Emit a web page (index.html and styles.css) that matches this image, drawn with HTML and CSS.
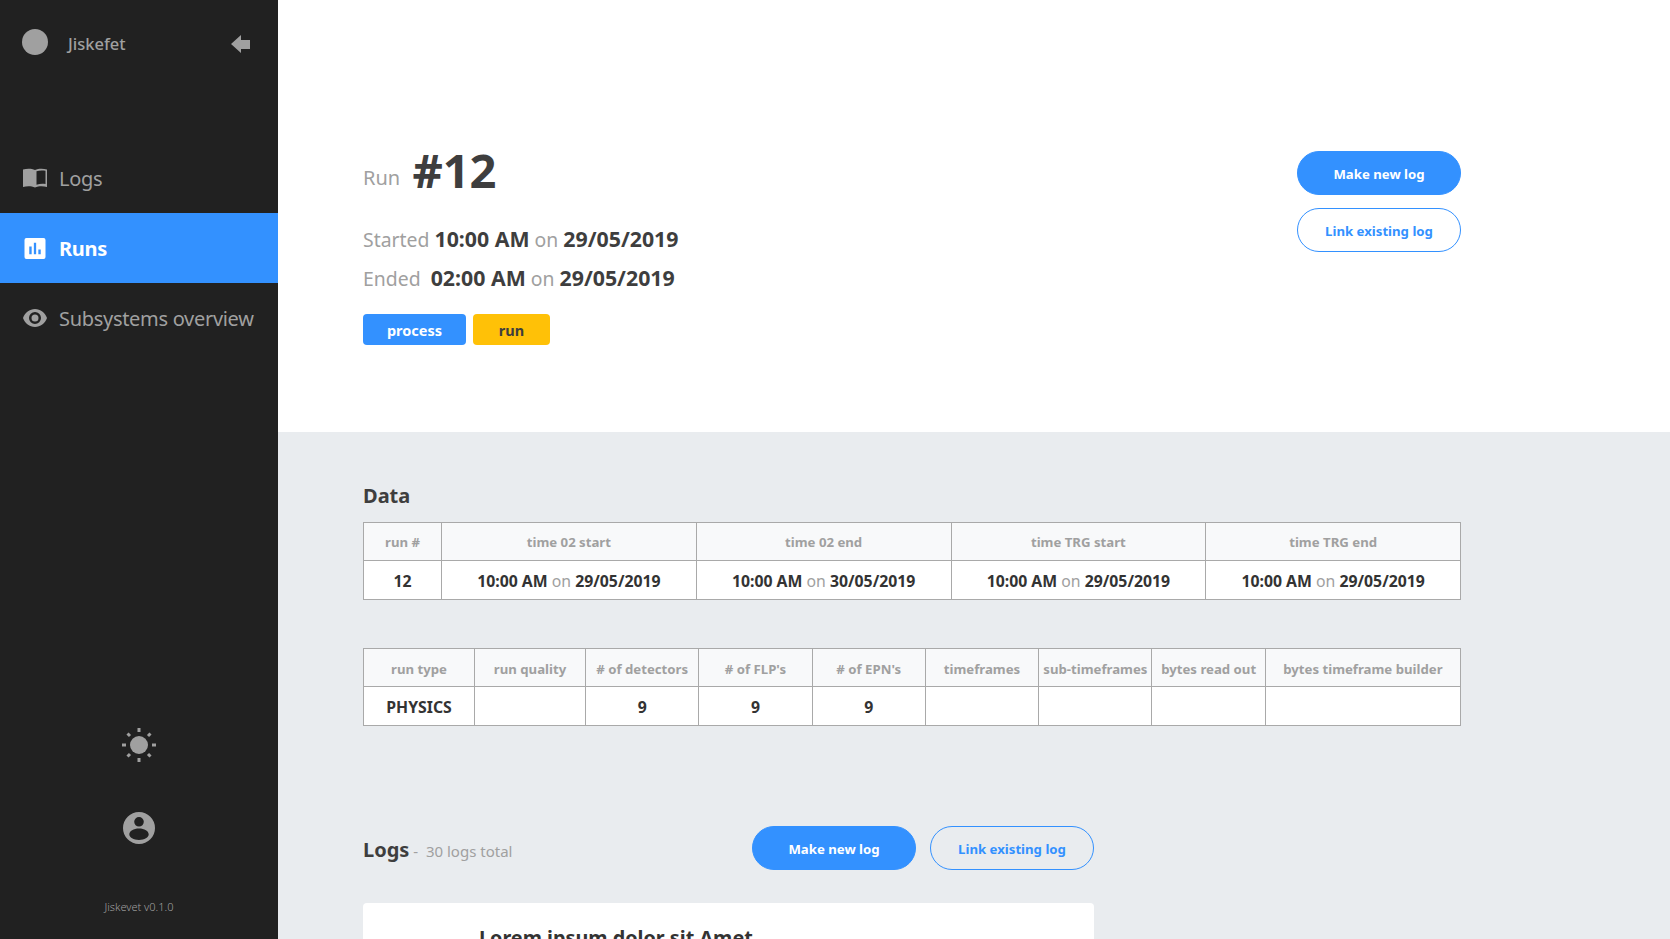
FILE: index.html
```html
<!DOCTYPE html>
<html lang="en">
<head>
  <meta charset="UTF-8" />
  <title>Jiskefet - Run 12</title>
  <link rel="stylesheet" href="styles.css">
</head>
<body>
  <div class="app">
    <!-- Sidebar -->
    <aside class="sidebar">
      <div class="brand">
        <span class="brand-dot"></span>
        <span class="brand-name">Jiskefet</span>
        <svg class="brand-back" width="20" height="20" viewBox="0 0 20 20"><path d="M0 10 L10 1 V6 H19 V15 H10 V19 Z" fill="currentColor"/></svg>
      </div>
      <nav class="nav">
        <a class="nav-item">
          <svg width="24" height="20" viewBox="0 0 24 20"><path fill="currentColor" fill-rule="evenodd" d="M0 1.500C4 .3 8.500.3 12 2c3.500-1.700 8-1.700 12-.5V19c-4-1-8.500-1-12 .6C8.500 18 4 18 0 19ZM13.500 3.200V16.800c2.800-1 5.800-1.200 9-.8V2.800c-3.200-.6-6.400-.4-9 .4Z"/></svg>
          <span>Logs</span>
        </a>
        <a class="nav-item active">
          <svg width="24" height="21" viewBox="0 0 22 22"><path fill="currentColor" fill-rule="evenodd" d="M2 0H20A2 2 0 0 1 22 2V20A2 2 0 0 1 20 22H2A2 2 0 0 1 0 20V2A2 2 0 0 1 2 0ZM5 9V17H7.500V9ZM9.800 5V17H12.200V5ZM14.500 12V17H17V12Z"/></svg>
          <span>Runs</span>
        </a>
        <a class="nav-item">
          <svg width="24" height="18" viewBox="0 0 24 18"><path fill="currentColor" fill-rule="evenodd" d="M12 0C6.500 0 2 3.700 0 9c2 5.300 6.500 9 12 9s10-3.700 12-9C22 3.700 17.500 0 12 0Zm0 15a6 6 0 1 1 0-12 6 6 0 0 1 0 12Zm0-9.500a3.500 3.500 0 1 0 0 7 3.500 3.500 0 0 0 0-7Z"/></svg>
          <span>Subsystems overview</span>
        </a>
      </nav>
      <div class="side-bottom">
        <svg class="side-icon" width="34" height="34" viewBox="0 0 34 34">
          <circle cx="17" cy="17" r="9" fill="currentColor"/>
          <path stroke="currentColor" stroke-width="3" d="M17 0V4M17 30V34M0 17H4M30 17H34M5.500 5.500L8 8M26 26L28.500 28.500M5.500 28.500L8 26M26 8L28.500 5.500"/>
        </svg>
        <svg class="side-icon" width="32" height="32" viewBox="0 0 32 32"><path fill="currentColor" fill-rule="evenodd" d="M16 0a16 16 0 1 0 0 32 16 16 0 0 0 0-32Zm0 5a4.800 4.800 0 1 1 0 9.600 4.800 4.800 0 0 1 0-9.600Zm0 11.500c5.400 0 9.700 2.600 9.700 5.800S21.400 28 16 28s-9.700-2.500-9.700-5.700 4.300-5.800 9.700-5.800Z"/></svg>
        <div class="version">Jiskevet v0.1.0</div>
      </div>
    </aside>

    <main class="main">
      <!-- Run header -->
      <section class="run-head">
        <div class="run-info">
          <div class="run-title"><span class="muted">Run</span> <strong>#12</strong></div>
          <div class="run-time"><span class="muted">Started</span> <b>10:00 AM</b> <span class="muted">on</span> <b>29/05/2019</b></div>
          <div class="run-time"><span class="muted">Ended</span>&nbsp; <b>02:00 AM</b> <span class="muted">on</span> <b>29/05/2019</b></div>
          <div class="tags">
            <span class="tag tag-process">process</span>
            <span class="tag tag-run">run</span>
          </div>
        </div>
        <div class="run-actions">
          <button class="btn btn-fill">Make new log</button>
          <button class="btn btn-line">Link existing log</button>
        </div>
      </section>

      <!-- Data and logs -->
      <section class="run-body">
        <h2 class="data-title">Data</h2>
        <table class="data-table first">
          <colgroup><col class="c-run"><col><col><col><col></colgroup>
          <thead>
            <tr><th>run #</th><th>time 02 start</th><th>time 02 end</th><th>time TRG start</th><th>time TRG end</th></tr>
          </thead>
          <tbody>
            <tr>
              <td>12</td>
              <td>10:00 AM <span class="on">on</span> 29/05/2019</td>
              <td>10:00 AM <span class="on">on</span> 30/05/2019</td>
              <td>10:00 AM <span class="on">on</span> 29/05/2019</td>
              <td>10:00 AM <span class="on">on</span> 29/05/2019</td>
            </tr>
          </tbody>
        </table>
        <table class="data-table second">
          <colgroup><col span="2" class="c-type"><col span="6" class="c-even"><col></colgroup>
          <thead>
            <tr><th>run type</th><th>run quality</th><th># of detectors</th><th># of FLP's</th><th># of EPN's</th><th>timeframes</th><th>sub-timeframes</th><th>bytes read out</th><th>bytes timeframe builder</th></tr>
          </thead>
          <tbody>
            <tr><td>PHYSICS</td><td></td><td>9</td><td>9</td><td>9</td><td></td><td></td><td></td><td></td></tr>
          </tbody>
        </table>

        <div class="logs-bar">
          <div class="logs-title"><strong>Logs</strong> <span class="muted">- &nbsp;30 logs total</span></div>
          <div class="logs-actions">
            <button class="btn btn-fill">Make new log</button>
            <button class="btn btn-line btn-clear">Link existing log</button>
          </div>
        </div>
        <article class="log-card">
          <h3>Lorem ipsum dolor sit Amet</h3>
        </article>
      </section>
    </main>
  </div>
</body>
</html>
```

FILE: styles.css
```css
/* Reset & base */
* { box-sizing: border-box; margin: 0; padding: 0; }
html, body { height: 100%; overflow: hidden; }
body { font-family: "Noto Sans", "Open Sans", sans-serif; background: #e9ecef; color: #3e3e3e; }
.app { display: flex; height: 939px; overflow: hidden; }
.muted { color: #a0a0a0; font-weight: 400; }

/* Sidebar */
.sidebar { width: 278px; flex: none; background: #212121; color: #a0a0a0; display: flex; flex-direction: column; }
.brand { display: flex; align-items: center; height: 84px; padding: 0 27px 0 22px; }
.brand-dot { width: 26px; height: 26px; border-radius: 50%; background: #a0a0a0; margin-right: 20px; }
.brand-name { flex: 1; font-size: 16.500px; font-weight: 500; margin-top: 2px; }
.brand-back { margin-top: 4px; }
.nav { margin-top: 59px; }
.nav-item { display: flex; align-items: center; height: 70px; padding-left: 23px; font-size: 20px; letter-spacing: -0.3px; gap: 12px; }
.nav-item svg { flex: none; }
.nav-item.active { background: #3391ff; color: #fff; font-weight: 700; }
.side-bottom { margin-top: auto; display: flex; flex-direction: column; align-items: center; padding-bottom: 25px; }
.side-icon { display: block; }
.side-icon + .side-icon { margin-top: 50px; }
.version { margin-top: 55px; font-size: 11px; font-weight: 300; }

/* Main */
.main { flex: 1; min-width: 0; }
.run-head { height: 432px; background: #fff; padding: 145px 209px 0 85px; display: flex; justify-content: space-between; }
.run-title { font-size: 20px; height: 50px; line-height: 50px; }
.run-title .muted { vertical-align: 3px; }
.run-title strong { font-size: 47px; font-weight: 700; color: #3e3e3e; margin-left: 7px; }
.run-time { font-size: 19.400px; line-height: 39px; }
.run-title + .run-time { margin-top: 25px; }
.run-time b { font-size: 21.300px; line-height: 1; font-weight: 700; }
.tags { display: flex; gap: 7px; margin-top: 16px; }
.tag { height: 31px; line-height: 32px; border-radius: 4px; text-align: center; font-size: 14.500px; font-weight: 700; }
.tag-process { width: 103px; background: #3391ff; color: #fff; }
.tag-run { width: 77px; background: #ffc107; color: #3e3e3e; }
.run-actions { display: flex; flex-direction: column; gap: 13px; padding-top: 6px; }

/* Buttons */
.btn { width: 164px; height: 44px; padding-top: 2px; border-radius: 22px; font-family: inherit; font-size: 13.200px; font-weight: 700; border: 1px solid #3391ff; }
.btn-fill { background: #3391ff; color: #fff; }
.btn-line { background: #fff; color: #3391ff; }
.btn-clear { background: transparent; }

/* Data tables */
.run-body { padding: 49px 209px 0 85px; }
.data-title { font-size: 20px; line-height: 30px; font-weight: 700; margin-bottom: 11px; }
.data-table { width: 100%; table-layout: fixed; border-collapse: collapse; background: #fff; }
.data-table.second { margin-top: 48px; }
.data-table th, .data-table td { border: 1px solid #a9a9a9; text-align: center; padding: 0; white-space: nowrap; font-weight: 700; }
.data-table th { height: 38px; background: #f8f9fa; color: #a0a0a0; font-size: 13.200px; }
.data-table.second th { padding-top: 2px; }
.data-table td { height: 39px; padding-top: 2px; color: #333; font-size: 15.800px; }
.data-table .on { color: #a0a0a0; font-weight: 400; }
.c-run { width: 78px; }
.c-type { width: 111px; }
.c-even { width: 113.300px; }

/* Logs */
.logs-bar { display: flex; align-items: center; margin-top: 100px; height: 44px; }
.logs-title { width: 389px; padding-top: 2px; font-size: 15px; }
.logs-title strong { font-size: 20px; }
.logs-actions { display: flex; gap: 14px; }
.log-card { width: 731px; height: 36px; margin-top: 33px; background: #fff; border-radius: 4px 4px 0 0; padding: 22px 116px 0; overflow: hidden; }
.log-card h3 { font-size: 19.800px; font-weight: 700; line-height: 26px; color: #333; }
```
